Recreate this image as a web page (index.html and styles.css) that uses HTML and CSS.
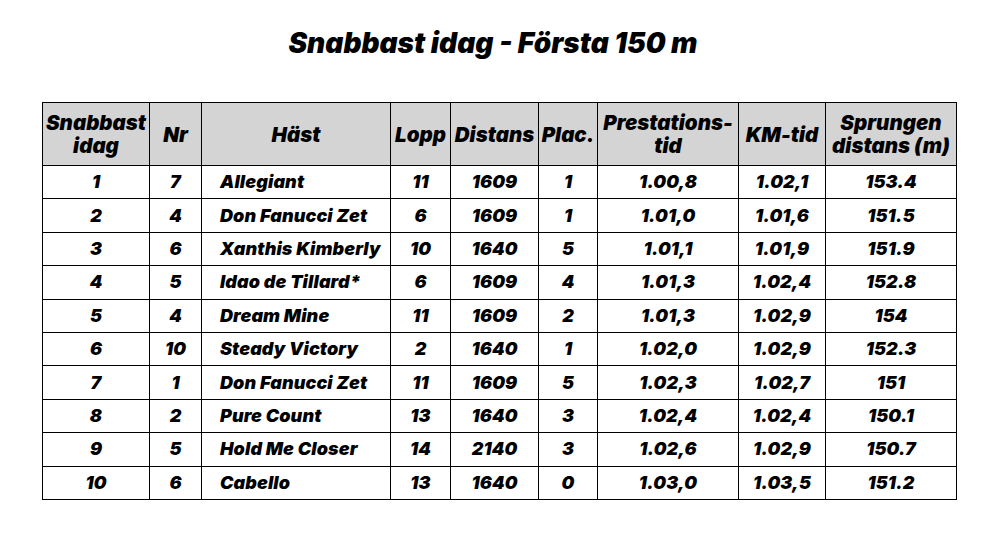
FILE: index.html
```html
<!DOCTYPE html>
<html lang="sv">
<head>
<meta charset="utf-8">
<link rel="stylesheet" href="styles.css">
</head>
<body>
<div class="page">
  <h1 class="title">Snabbast idag - Första 150 m</h1>
  <table class="results">
    <colgroup>
      <col class="c1"><col class="c2"><col class="c3"><col class="c4"><col class="c5"><col class="c6"><col class="c7"><col class="c8"><col class="c9">
    </colgroup>
    <thead>
      <tr>
        <th>Snabbast<br>idag</th>
        <th>Nr</th>
        <th>Häst</th>
        <th>Lopp</th>
        <th>Distans</th>
        <th>Plac.</th>
        <th>Prestations-<br>tid</th>
        <th>KM-tid</th>
        <th>Sprungen<br>distans (m)</th>
      </tr>
    </thead>
    <tbody>
      <tr><td>1</td><td>7</td><td class="name">Allegiant</td><td>11</td><td>1609</td><td>1</td><td>1.00,8</td><td>1.02,1</td><td>153.4</td></tr>
      <tr><td>2</td><td>4</td><td class="name">Don Fanucci Zet</td><td>6</td><td>1609</td><td>1</td><td>1.01,0</td><td>1.01,6</td><td>151.5</td></tr>
      <tr><td>3</td><td>6</td><td class="name">Xanthis Kimberly</td><td>10</td><td>1640</td><td>5</td><td>1.01,1</td><td>1.01,9</td><td>151.9</td></tr>
      <tr><td>4</td><td>5</td><td class="name">Idao de Tillard*</td><td>6</td><td>1609</td><td>4</td><td>1.01,3</td><td>1.02,4</td><td>152.8</td></tr>
      <tr><td>5</td><td>4</td><td class="name">Dream Mine</td><td>11</td><td>1609</td><td>2</td><td>1.01,3</td><td>1.02,9</td><td>154</td></tr>
      <tr><td>6</td><td>10</td><td class="name">Steady Victory</td><td>2</td><td>1640</td><td>1</td><td>1.02,0</td><td>1.02,9</td><td>152.3</td></tr>
      <tr><td>7</td><td>1</td><td class="name">Don Fanucci Zet</td><td>11</td><td>1609</td><td>5</td><td>1.02,3</td><td>1.02,7</td><td>151</td></tr>
      <tr><td>8</td><td>2</td><td class="name">Pure Count</td><td>13</td><td>1640</td><td>3</td><td>1.02,4</td><td>1.02,4</td><td>150.1</td></tr>
      <tr><td>9</td><td>5</td><td class="name">Hold Me Closer</td><td>14</td><td>2140</td><td>3</td><td>1.02,6</td><td>1.02,9</td><td>150.7</td></tr>
      <tr><td>10</td><td>6</td><td class="name">Cabello</td><td>13</td><td>1640</td><td>0</td><td>1.03,0</td><td>1.03,5</td><td>151.2</td></tr>
    </tbody>
  </table>
</div>
</body>
</html>
```
FILE: styles.css
```css
html, body {
  margin: 0;
  padding: 0;
  background: #ffffff;
}
body {
  font-family: Inter, "Noto Sans", sans-serif;
  font-style: italic;
  font-weight: 900;
  color: #000;
}
.page {
  padding: 24px 0 0 42px;
}
.title {
  box-sizing: border-box;
  margin: 0 0 40px 0;
  padding-right: 12px;
  width: 914px;
  text-align: center;
  font-size: 28px;
  line-height: 38px;
  font-weight: 900;
}
.results {
  border-collapse: collapse;
  width: 914px;
  table-layout: fixed;
}
.c1 { width: 107px; }
.c2 { width: 52px; }
.c3 { width: 189px; }
.c4 { width: 60px; }
.c5 { width: 88px; }
.c6 { width: 59px; }
.c7 { width: 141px; }
.c8 { width: 87px; }
.c9 { width: 131px; }
.results th,
.results td {
  border: 1px solid #000;
  padding: 0;
  text-align: center;
  vertical-align: middle;
}
.results th {
  background: #d4d4d4;
  height: 62px;
  font-size: 20.5px;
  line-height: 23px;
  font-weight: 900;
  letter-spacing: 0;
}
.results td {
  height: 32.4px;
  font-size: 18px;
  line-height: 20px;
  letter-spacing: 0.1px;
}
.results td.name {
  text-align: left;
  padding-left: 18px;
}
```
